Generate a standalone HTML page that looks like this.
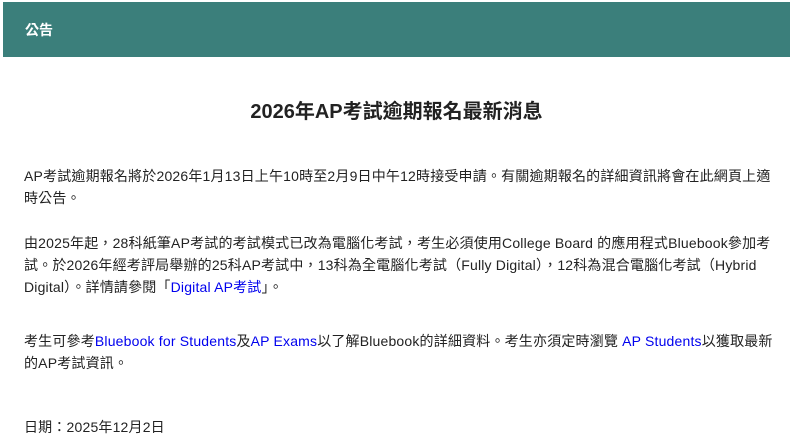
<!DOCTYPE html>
<html><head><meta charset="utf-8"><style>
html,body{margin:0;padding:0;background:#fff;width:793px;height:445px;overflow:hidden}
body{font-family:"Liberation Sans","Noto Sans CJK TC",sans-serif;color:#222;font-size:14px}
.hd{position:absolute;left:3px;top:2px;width:787px;height:55px;background:#3b7f7b;color:#fff;font-weight:bold;font-size:14px;line-height:57px;padding-left:22px;box-sizing:border-box}
h1{position:absolute;left:0;width:793px;top:99px;margin:0;text-align:center;font-size:20px;line-height:26px;font-weight:bold;color:#222}
.l{position:absolute;left:24px;white-space:nowrap;line-height:22px;letter-spacing:0.18px}
a{color:#0000ee;text-decoration:none}
</style></head><body>
<div class="hd">公告</div>
<h1>2026年AP考試逾期報名最新消息</h1>
<div class="l" style="top:165px">AP考試逾期報名將於2026年1月13日上午10時至2月9日中午12時接受申請。有關逾期報名的詳細資訊將會在此網頁上適</div>
<div class="l" style="top:187px">時公告。</div>
<div class="l" style="top:232px">由2025年起，28科紙筆AP考試的考試模式已改為電腦化考試，考生必須使用College Board 的應用程式Bluebook參加考</div>
<div class="l" style="top:254px">試。於2026年經考評局舉辦的25科AP考試中，13科為全電腦化考試（Fully Digital），12科為混合電腦化考試（Hybrid</div>
<div class="l" style="top:276px">Digital）。詳情請參閱「<a>Digital AP考試</a>」。</div>
<div class="l" style="top:330px">考生可參考<a>Bluebook for Students</a>及<a>AP Exams</a>以了解Bluebook的詳細資料。考生亦須定時瀏覽 <a>AP Students</a>以獲取最新</div>
<div class="l" style="top:352px">的AP考試資訊。</div>
<div class="l" style="top:416px">日期：2025年12月2日</div>
</body></html>
